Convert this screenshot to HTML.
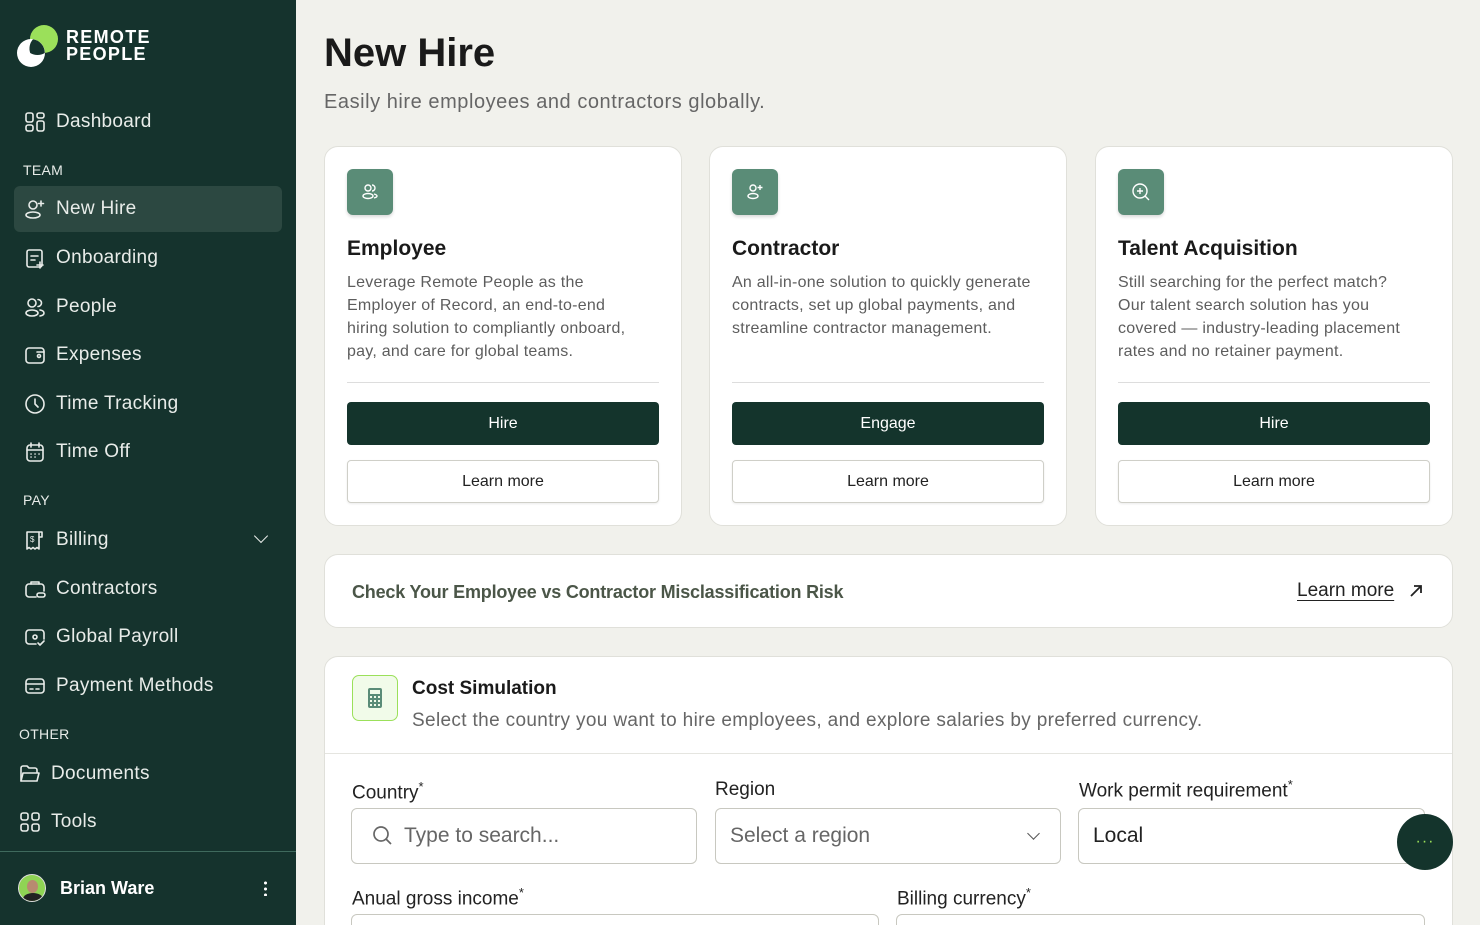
<!DOCTYPE html>
<html><head><style>
*{box-sizing:border-box;margin:0;padding:0}
html{width:1480px;height:925px;overflow:hidden}
body{width:1480px;height:925px;overflow:hidden;background:#f1f1ec;font-family:"Liberation Sans",sans-serif;position:relative}
.sb{position:absolute;left:0;top:0;width:296px;height:925px;background:#15332d;color:#eef2ef}
.ni{position:absolute;left:14px;width:268px;height:46px;display:flex;align-items:center;padding-left:10px;font-size:19px;color:#e8ece9;letter-spacing:.3px}
.ni svg{width:22px;height:22px;margin-right:10px;fill:none;stroke:#e8ece9;stroke-width:1.6;stroke-linecap:round;stroke-linejoin:round}
.sec{position:absolute;left:23px;font-size:14px;color:#e8ece9;letter-spacing:.3px}
.card{position:absolute;top:146px;width:358px;height:380px;background:#fff;border:1px solid #e0e0da;border-radius:14px}
.ib{position:absolute;left:22px;top:22px;width:46px;height:46px;background:#5a8c77;border-radius:6px;box-shadow:0 2px 3px rgba(0,0,0,.15);display:flex;align-items:center;justify-content:center}
.ib svg{width:24px;height:24px;fill:none;stroke:#fff;stroke-width:1.4}
.ct{position:absolute;left:22px;top:90px;font-size:21px;font-weight:bold;color:#1a1a1a}
.cd{position:absolute;left:22px;top:124px;width:300px;font-size:16px;line-height:23px;color:#5d5d5d;letter-spacing:.25px}
.hr{position:absolute;left:22px;right:22px;top:235px;border-top:1px solid #ddd}
.b1{position:absolute;left:22px;right:22px;top:255px;height:43px;background:#14342c;color:#fff;border-radius:4px;font-size:16px;display:flex;align-items:center;justify-content:center}
.b2{position:absolute;left:22px;right:22px;top:313px;height:43px;background:#fff;border:1px solid #cfcfc8;color:#222;border-radius:4px;font-size:16px;display:flex;align-items:center;justify-content:center;box-shadow:0 1px 2px rgba(0,0,0,.08)}
.lab{position:absolute;font-size:19px;color:#222}
.lab sup{font-size:13px}
.inp{position:absolute;height:56px;border:1px solid #c8c8c0;border-radius:6px;background:#fff;font-size:21px;color:#666;display:flex;align-items:center;padding-left:14px}
</style></head><body>
<div class="sb">
 <svg style="position:absolute;left:16px;top:23px" width="46" height="46" viewBox="0 0 46 46"><circle cx="28" cy="16" r="14" fill="#9be05a"/><circle cx="15" cy="30" r="14" fill="#fff"/><path d="M17 16.2 A14 14 0 0 1 28.8 30 A14 14 0 0 1 14.2 30 A14 14 0 0 1 17 16.2Z" fill="#15332d"/></svg>
 <div style="position:absolute;left:66px;top:29px;font-size:18px;font-weight:bold;line-height:17px;letter-spacing:1.3px;color:#fff">REMOTE<br>PEOPLE</div>
 <div class="ni" style="top:99px"><svg viewBox="0 0 22 22"><rect x="2" y="2" width="7" height="9" rx="2"/><rect x="13" y="2" width="7" height="5" rx="2"/><rect x="2" y="14" width="7" height="6" rx="2"/><rect x="13" y="10" width="7" height="10" rx="2"/></svg>Dashboard</div>
 <div class="sec" style="top:162px">TEAM</div>
 <div class="ni" style="top:186px;background:#2c4841;border-radius:6px"><svg viewBox="0 0 22 22"><circle cx="9" cy="7" r="4"/><ellipse cx="9" cy="17" rx="7" ry="3"/><path d="M17 3v5M14.5 5.5h5"/></svg>New Hire</div>
 <div class="ni" style="top:235px"><svg viewBox="0 0 22 22"><rect x="3" y="3" width="15" height="17" rx="2"/><path d="M7 9h7M7 13h4M16 15v6M13 18h6"/></svg>Onboarding</div>
 <div class="ni" style="top:284px"><svg viewBox="0 0 22 22"><circle cx="8" cy="7" r="4"/><ellipse cx="8" cy="17" rx="6" ry="3"/><path d="M14 3.5a3.5 3.5 0 0 1 0 7M16 14c3 .5 4 2 4 3s-1 2.5-4 3"/></svg>People</div>
 <div class="ni" style="top:332px"><svg viewBox="0 0 22 22"><rect x="2" y="4" width="18" height="15" rx="3"/><circle cx="15" cy="12" r="1.5"/><path d="M13 8h7"/></svg>Expenses</div>
 <div class="ni" style="top:381px"><svg viewBox="0 0 22 22"><circle cx="11" cy="11" r="9"/><path d="M11 6v5l3 3"/></svg>Time Tracking</div>
 <div class="ni" style="top:429px"><svg viewBox="0 0 22 22"><rect x="3" y="4" width="16" height="16" rx="3"/><path d="M3 9h16M7 2v4M15 2v4M7 13h.1M11 13h.1M15 13h.1M7 16h.1M11 16h.1"/></svg>Time Off</div>
 <div class="sec" style="top:492px">PAY</div>
 <div class="ni" style="top:517px"><svg viewBox="0 0 22 22"><path d="M3 3h12v17l-2-1.5-2 1.5-2-1.5-2 1.5-2-1.5-2 1.5z"/><path d="M15 3h3v5h-3"/><text x="6" y="13" font-size="8" fill="#e8ece9" stroke="none">$</text></svg>Billing<span style="position:absolute;right:16px;top:14px;width:10px;height:10px;border-right:1.6px solid #e8ece9;border-bottom:1.6px solid #e8ece9;transform:rotate(45deg)"></span></div>
 <div class="ni" style="top:566px"><svg viewBox="0 0 22 22"><path d="M7 6V4h8v2"/><path d="M12 19H5a3 3 0 0 1-3-3V9a3 3 0 0 1 3-3h12a3 3 0 0 1 3 3v4"/><rect x="13" y="15" width="8" height="4" rx="2"/></svg>Contractors</div>
 <div class="ni" style="top:614px"><svg viewBox="0 0 22 22"><path d="M12 18H5a3 3 0 0 1-3-3V7a3 3 0 0 1 3-3h12a3 3 0 0 1 3 3v6"/><circle cx="11" cy="11" r="2"/><path d="M14 17l2 2 4-4"/></svg>Global Payroll</div>
 <div class="ni" style="top:663px"><svg viewBox="0 0 22 22"><rect x="2" y="4" width="18" height="14" rx="3"/><path d="M2 9h18M6 14h3M12 14h3"/></svg>Payment Methods</div>
 <div class="sec" style="top:726px;left:19px">OTHER</div>
 <div class="ni" style="top:751px;left:9px"><svg viewBox="0 0 22 22"><path d="M2 18V5a2 2 0 0 1 2-2h4l2 2h6a2 2 0 0 1 2 2v2"/><path d="M2 18l2-8h16l-2 8z"/></svg>Documents</div>
 <div class="ni" style="top:799px;left:9px"><svg viewBox="0 0 22 22"><rect x="2" y="2" width="7" height="7" rx="2"/><rect x="13" y="2" width="7" height="7" rx="2"/><rect x="2" y="13" width="7" height="7" rx="2"/><rect x="13" y="13" width="7" height="7" rx="2"/></svg>Tools</div>
 <div style="position:absolute;left:0;top:851px;width:296px;border-top:1px solid #3f6a5d"></div>
 <div style="position:absolute;left:18px;top:874px;width:28px;height:28px;border-radius:50%;background:#8fd454;border:1px solid #ddd;overflow:hidden"><div style="position:absolute;left:8px;top:5px;width:11px;height:13px;border-radius:50%;background:#b88a70"></div><div style="position:absolute;left:4px;top:18px;width:20px;height:12px;border-radius:50%;background:#222"></div></div>
 <div style="position:absolute;left:60px;top:878px;font-size:18px;font-weight:bold;color:#fff">Brian Ware</div>
 <div style="position:absolute;left:264px;top:880px;width:3px;height:16px;background:radial-gradient(circle,#fff 1.4px,transparent 1.6px) 0 0/3px 6px"></div>
</div>

<div style="position:absolute;left:324px;top:31px;font-size:40px;font-weight:bold;color:#1a1a1a">New Hire</div>
<div style="position:absolute;left:324px;top:91px;font-size:20px;color:#666;letter-spacing:.55px">Easily hire employees and contractors globally.</div>

<div class="card" style="left:324px"><div class="ib"><svg viewBox="0 0 24 24"><circle cx="10" cy="8" r="3"/><ellipse cx="10" cy="16" rx="5" ry="2.5"/><path d="M14 5a3 3 0 0 1 0 6M16 14c2 .5 3 1.2 3 2s-1 1.5-3 2"/></svg></div><div class="ct">Employee</div><div class="cd">Leverage Remote People as the Employer of Record, an end-to-end hiring solution to compliantly onboard, pay, and care for global teams.</div><div class="hr"></div><div class="b1">Hire</div><div class="b2">Learn more</div></div>
<div class="card" style="left:709px"><div class="ib"><svg viewBox="0 0 24 24"><circle cx="10" cy="8" r="3"/><ellipse cx="10" cy="16" rx="5" ry="2.5"/><path d="M17 5v5M14.5 7.5h5"/></svg></div><div class="ct">Contractor</div><div class="cd">An all-in-one solution to quickly generate contracts, set up global payments, and streamline contractor management.</div><div class="hr"></div><div class="b1">Engage</div><div class="b2">Learn more</div></div>
<div class="card" style="left:1095px"><div class="ib"><svg viewBox="0 0 24 24"><circle cx="11" cy="11" r="7"/><path d="M16 16l4 4M11 8v6M8 11h6"/></svg></div><div class="ct">Talent Acquisition</div><div class="cd">Still searching for the perfect match? Our talent search solution has you covered — industry-leading placement rates and no retainer payment.</div><div class="hr"></div><div class="b1">Hire</div><div class="b2">Learn more</div></div>

<div style="position:absolute;left:324px;top:554px;width:1129px;height:74px;background:#fff;border:1px solid #e0e0da;border-radius:14px">
 <div style="position:absolute;left:27px;top:27px;font-size:18px;font-weight:bold;color:#4b5648;letter-spacing:-.2px">Check Your Employee vs Contractor Misclassification Risk</div>
 <div style="position:absolute;left:972px;top:25px;font-size:19px;color:#222;text-decoration:underline;text-underline-offset:4px">Learn more</div>
 <svg style="position:absolute;left:1084px;top:29px" width="14" height="14" viewBox="0 0 14 14"><path d="M2 12L12 2M5 2h7v7" fill="none" stroke="#222" stroke-width="1.8"/></svg>
</div>

<div style="position:absolute;left:324px;top:656px;width:1129px;height:300px;background:#fff;border:1px solid #e0e0da;border-radius:14px">
 <div style="position:absolute;left:27px;top:18px;width:46px;height:46px;background:#f1fbe9;border:1.5px solid #9be05a;border-radius:7px;display:flex;align-items:center;justify-content:center"><svg width="18" height="22" viewBox="0 0 18 22"><rect x="2" y="1" width="14" height="20" rx="2" fill="#5a8c77"/><rect x="4" y="3" width="10" height="4" fill="#f1fbe9"/><g fill="#f1fbe9"><rect x="4" y="9" width="2" height="2"/><rect x="8" y="9" width="2" height="2"/><rect x="12" y="9" width="2" height="2"/><rect x="4" y="13" width="2" height="2"/><rect x="8" y="13" width="2" height="2"/><rect x="12" y="13" width="2" height="2"/><rect x="4" y="17" width="2" height="2"/><rect x="8" y="17" width="2" height="2"/><rect x="12" y="17" width="2" height="2"/></g></svg></div>
 <div style="position:absolute;left:87px;top:21px;font-size:19px;font-weight:bold;color:#1a1a1a">Cost Simulation</div>
 <div style="position:absolute;left:87px;top:53px;font-size:19px;color:#666;letter-spacing:.35px">Select the country you want to hire employees, and explore salaries by preferred currency.</div>
 <div style="position:absolute;left:0;right:0;top:96px;border-top:1px solid #e5e5e0"></div>
</div>
<div class="lab" style="left:352px;top:779px">Country<sup>*</sup></div>
<div class="lab" style="left:715px;top:779px">Region</div>
<div class="lab" style="left:1079px;top:777px">Work permit requirement<sup>*</sup></div>
<div class="inp" style="left:351px;top:808px;width:346px;padding-left:20px"><svg width="22" height="22" viewBox="0 0 22 22" style="margin-right:10px"><circle cx="9" cy="9" r="7" fill="none" stroke="#666" stroke-width="1.7"/><path d="M14 14l5 5" stroke="#666" stroke-width="1.7"/></svg>Type to search...</div>
<div class="inp" style="left:715px;top:808px;width:346px">Select a region<span style="position:absolute;right:22px;top:20px;width:9px;height:9px;border-right:1.6px solid #555;border-bottom:1.6px solid #555;transform:rotate(45deg)"></span></div>
<div class="inp" style="left:1078px;top:808px;width:347px;color:#222">Local</div>
<div class="lab" style="left:352px;top:885px">Anual gross income<sup>*</sup></div>
<div class="lab" style="left:897px;top:885px">Billing currency<sup>*</sup></div>
<div class="inp" style="left:351px;top:914px;width:528px"></div>
<div class="inp" style="left:896px;top:914px;width:529px"></div>
<div style="position:absolute;left:1397px;top:814px;width:56px;height:56px;border-radius:50%;background:#14342c;color:#9be05a;font-size:16px;display:flex;align-items:center;justify-content:center;letter-spacing:1px">···</div>
</body></html>
